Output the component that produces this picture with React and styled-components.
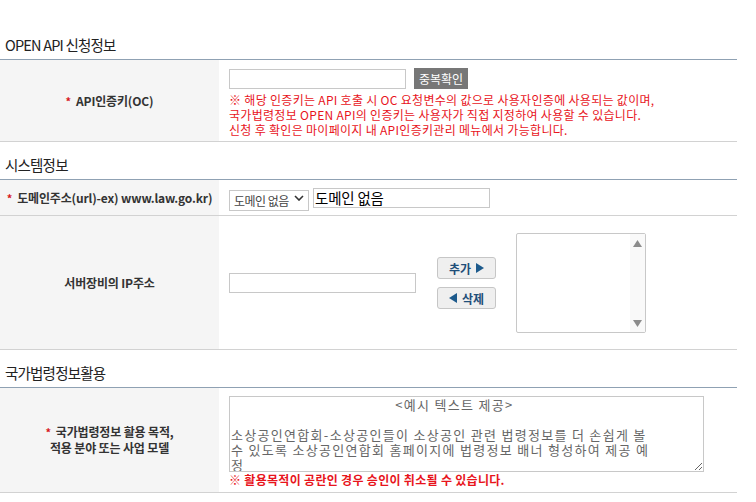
import styled, { createGlobalStyle } from 'styled-components'

const GlobalStyle = createGlobalStyle`
	body {
		margin: 0;
		background: #ffffff;
		font-family: 'Noto Sans CJK KR', 'Noto Sans', sans-serif;
		color: #333333;
	}
`

const memoLines = [
	' '.repeat(39) + '<예시 텍스트 제공>',
	'',
	'소상공인연합회-소상공인들이 소상공인 관련 법령정보를 더 손쉽게 볼',
	'수 있도록 소상공인연합회 홈페이지에 법령정보 배너 형성하여 제공 예',
	'정',
]

const ArrowUp = () => (
	<svg width='9' height='7' viewBox='0 0 9 7'>
		<polygon points='4.5,0 9,7 0,7' fill='#8c8c8c' />
	</svg>
)

const ArrowDown = () => (
	<svg width='9' height='7' viewBox='0 0 9 7'>
		<polygon points='0,0 9,0 4.5,7' fill='#8c8c8c' />
	</svg>
)

const Triangle = ({ dir }) => (
	<svg width='8' height='10' viewBox='0 0 8 10'>
		{dir === 'right' ? (
			<polygon points='0,0 8,5 0,10' fill='#1d5a8c' />
		) : (
			<polygon points='8,0 0,5 8,10' fill='#1d5a8c' />
		)}
	</svg>
)

const Label = ({ children, required = true }) => (
	<LabelCell>
		<div>
			{required && <Star>*</Star>}
			{children}
		</div>
	</LabelCell>
)

const App = () => {
	return (
		<>
			<GlobalStyle />
			<Page>
				<SectionTitle>OPEN API 신청정보</SectionTitle>
				<FormRow>
					<Label>API인증키(OC)</Label>
					<FieldCell $pad='8px 10px 4px'>
						<InlineGroup>
							<TextInput type='text' $width={177} />
							<CheckButton type='button'>중복확인</CheckButton>
						</InlineGroup>
						<Notice>
							※ 해당 인증키는 API 호출 시 OC 요청변수의 값으로 사용자인증에 사용되는 값이며,
							<br />
							국가법령정보 OPEN API의 인증키는 사용자가 직접 지정하여 사용할 수 있습니다.
							<br />
							신청 후 확인은 마이페이지 내 API인증키관리 메뉴에서 가능합니다.
						</Notice>
					</FieldCell>
				</FormRow>

				<SectionTitle>시스템정보</SectionTitle>
				<FormRow>
					<Label>도메인주소(url)-ex) www.law.go.kr)</Label>
					<FieldCell $pad='7px 10px' $row>
						<SelectWrap>
							<DomainSelect defaultValue='none'>
								<option value='none'>도메인 없음</option>
							</DomainSelect>
							<Chevron width='10' height='6' viewBox='0 0 10 6'>
								<polyline points='1,1 5,5 9,1' fill='none' stroke='#333' strokeWidth='1.6' />
							</Chevron>
						</SelectWrap>
						<DomainInput type='text' defaultValue='도메인 없음' />
					</FieldCell>
				</FormRow>
				<FormRow>
					<Label required={false}>서버장비의 IP주소</Label>
					<FieldCell $pad='17px 10px 16px' $row $gap={20}>
						<TextInput type='text' $width={187} />
						<ButtonStack>
							<MoveButton type='button'>
								추가 <Triangle dir='right' />
							</MoveButton>
							<MoveButton type='button'>
								<Triangle dir='left' /> 삭제
							</MoveButton>
						</ButtonStack>
						<Listbox>
							<ScrollTrack>
								<ArrowUp />
								<ArrowDown />
							</ScrollTrack>
						</Listbox>
					</FieldCell>
				</FormRow>

				<SectionTitle>국가법령정보활용</SectionTitle>
				<FormRow>
					<Label>
						국가법령정보 활용 목적,
						<br />
						적용 분야 또는 사업 모델
					</Label>
					<FieldCell $pad='8px 10px 5px'>
						<MemoArea defaultValue={memoLines.join('\n')} />
						<Notice $bold>※ 활용목적이 공란인 경우 승인이 취소될 수 있습니다.</Notice>
					</FieldCell>
				</FormRow>
			</Page>
		</>
	)
}
export default App

const Page = styled.div`
	width: 737px;
	padding-top: 22px;
`

const SectionTitle = styled.h3`
	margin: 0;
	padding: 13px 0 4px 5px;
	font-size: 14.5px;
	font-weight: normal;
	line-height: 20px;
	letter-spacing: -0.8px;
	color: #222222;
	border-bottom: 1px solid #8fa1b3;
`

const FormRow = styled.div`
	display: grid;
	grid-template-columns: 219px 1fr;
	border-bottom: 1px solid #d2d2d2;
`

const LabelCell = styled.div`
	background: #f5f5f5;
	display: flex;
	align-items: center;
	justify-content: center;
	text-align: center;
	font-size: 12px;
	font-weight: bold;
	line-height: 16px;
	letter-spacing: -0.15px;
	color: #333333;
`

const Star = styled.span`
	color: #d7191f;
	font-size: 11px;
	margin-right: 5px;
`

const FieldCell = styled.div`
	padding: ${(p) => p.$pad};
	display: flex;
	flex-direction: ${(p) => (p.$row ? 'row' : 'column')};
	align-items: ${(p) => (p.$row ? 'center' : 'flex-start')};
	gap: ${(p) => (p.$row ? `${p.$gap || 4}px` : '0')};
`

const InlineGroup = styled.div`
	display: flex;
	align-items: flex-end;
	gap: 8px;
`

const TextInput = styled.input`
	box-sizing: border-box;
	width: ${(p) => p.$width}px;
	height: 20px;
	margin: 0;
	padding: 0 4px;
	border: 1px solid #c8c8c8;
	font-family: inherit;
	font-size: 12px;
	outline: none;
`

const CheckButton = styled.button`
	height: 21px;
	padding: 0 5px;
	border: none;
	background: #777777;
	color: #ffffff;
	font-family: inherit;
	font-size: 12px;
	line-height: 21px;
	cursor: pointer;
`

const Notice = styled.p`
	margin: ${(p) => (p.$bold ? '0' : '3px')} 0 0;
	color: #e8141c;
	font-size: 12px;
	font-weight: ${(p) => (p.$bold ? 'bold' : 'normal')};
	line-height: 15px;
	letter-spacing: 0.3px;
`

const SelectWrap = styled.div`
	position: relative;
	width: 80px;
	height: 21px;
`

const DomainSelect = styled.select`
	appearance: none;
	box-sizing: border-box;
	width: 100%;
	height: 100%;
	margin: 0;
	padding: 0 0 0 4px;
	border: 1px solid #c8c8c8;
	border-radius: 0;
	background: #ffffff;
	color: #444444;
	font-family: inherit;
	font-size: 12px;
	letter-spacing: -0.5px;
`

const Chevron = styled.svg`
	position: absolute;
	right: 5px;
	top: 8px;
	pointer-events: none;
`

const DomainInput = styled.input`
	box-sizing: border-box;
	width: 177px;
	height: 20px;
	margin: 0;
	padding: 0 1px;
	border: 1px solid #c8c8c8;
	color: #000000;
	font-family: inherit;
	font-size: 14.5px;
	letter-spacing: -0.2px;
	outline: none;
`

const ButtonStack = styled.div`
	display: flex;
	flex-direction: column;
	gap: 8px;
	margin-left: 1px;
`

const MoveButton = styled.button`
	box-sizing: border-box;
	width: 59px;
	height: 22px;
	display: flex;
	align-items: center;
	justify-content: center;
	gap: 5px;
	padding: 0;
	border: 1px solid #c6c6c6;
	border-radius: 3px;
	background: #efefef;
	color: #1f4e79;
	font-family: inherit;
	font-size: 12px;
	font-weight: bold;
	cursor: pointer;
`

const Listbox = styled.div`
	box-sizing: border-box;
	width: 130px;
	height: 100px;
	display: flex;
	justify-content: flex-end;
	border: 1px solid #c8c8c8;
	border-radius: 2px;
	background: #ffffff;
`

const ScrollTrack = styled.div`
	width: 15px;
	display: flex;
	flex-direction: column;
	justify-content: space-between;
	align-items: center;
	padding: 6px 0 5px;
	background: #f9f9f9;
`

const MemoArea = styled.textarea`
	box-sizing: border-box;
	width: 475px;
	height: 76px;
	margin: 0;
	padding: 0 1px;
	border: 1px solid #c8c8c8;
	color: #666666;
	font-family: inherit;
	font-size: 13px;
	line-height: 15px;
	letter-spacing: 1.3px;
	overflow: hidden;
	outline: none;
`
